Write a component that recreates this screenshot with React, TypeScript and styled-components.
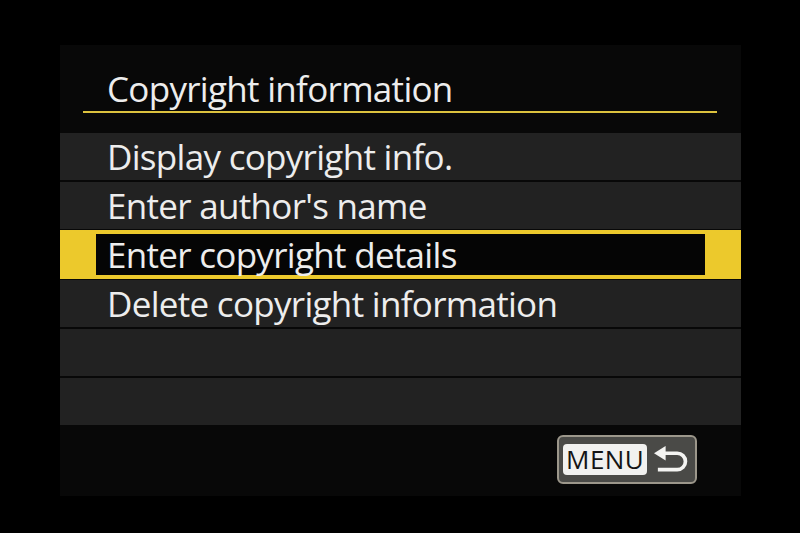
import styled, { createGlobalStyle } from "styled-components";

const GlobalStyle = createGlobalStyle`
  html, body {
    margin: 0;
    padding: 0;
    background: #000;
  }
  body {
    font-family: "Open Sans", "Noto Sans", "DejaVu Sans", sans-serif;
  }
`;

const Page = styled.div`
  width: 800px;
  height: 533px;
  background: #000;
  padding: 45px 0 0 60px;
  box-sizing: border-box;
`;

const Screen = styled.div`
  width: 681px;
  height: 451px;
  background: #080808;
  display: flex;
  flex-direction: column;
`;

const Header = styled.div`
  height: 88px;
  padding-top: 24px;
  box-sizing: border-box;
`;

const Title = styled.div`
  height: 40px;
  line-height: 40px;
  padding-left: 47px;
  font-size: 35px;
  font-weight: 500;
  color: #ededed;
  letter-spacing: -0.7px;
`;

const Rule = styled.div`
  margin: 2px 0 0 23px;
  width: 634px;
  height: 2px;
  background: #dcc23e;
`;

const List = styled.div`
  display: flex;
  flex-direction: column;
  gap: 2px;
`;

const Row = styled.div<{ $active?: boolean }>`
  box-sizing: border-box;
  display: flex;
  background: ${(p) => (p.$active ? "#ecc92c" : "#222222")};
  padding: ${(p) => (p.$active ? "4px 36px" : "0 0 0 47px")};
  margin: ${(p) => (p.$active ? "-1px 0" : "0")};
  height: ${(p) => (p.$active ? "49px" : "47px")};
`;

const Inner = styled.div<{ $active?: boolean }>`
  flex: 1;
  display: flex;
  align-items: center;
  background: ${(p) => (p.$active ? "#050505" : "transparent")};
  padding-left: ${(p) => (p.$active ? "11px" : "0")};
`;

const Label = styled.span`
  font-size: 35px;
  font-weight: 500;
  color: #ededed;
  letter-spacing: -0.7px;
  white-space: nowrap;
`;

const Footer = styled.div`
  flex: 1;
  display: flex;
  justify-content: flex-end;
  align-items: flex-start;
  padding: 10px 44px 0 0;
`;

const MenuButton = styled.div`
  width: 140px;
  height: 49px;
  box-sizing: border-box;
  border: 2px solid #9c978b;
  border-radius: 6px;
  background: #4a4a47;
  display: flex;
  align-items: center;
  padding: 0 6px 0 4px;
  gap: 7px;
`;

const MenuLabel = styled.div`
  width: 87px;
  height: 31px;
  border-radius: 4px;
  background: #f1f1ef;
  color: #141414;
  font-size: 26px;
  font-weight: 500;
  line-height: 31px;
  text-align: center;
  letter-spacing: 0.4px;
`;

const items = [
  "Display copyright info.",
  "Enter author's name",
  "Enter copyright details",
  "Delete copyright information",
  "",
  "",
];

function ReturnIcon() {
  return (
    <svg width="36" height="28" viewBox="0 0 36 28">
      <polygon points="0,7 12,-0.5 12,14.5" fill="#f4f4f2" />
      <path
        d="M9 7 H24 A8.5 8.5 0 0 1 24 24 H4"
        fill="none"
        stroke="#f4f4f2"
        strokeWidth="3.8"
      />
    </svg>
  );
}

export default function App() {
  return (
    <>
      <GlobalStyle />
      <Page>
        <Screen>
          <Header>
            <Title>Copyright information</Title>
            <Rule />
          </Header>
          <List>
            {items.map((text, i) => {
              const active = i === 2;
              return (
                <Row key={i} $active={active}>
                  <Inner $active={active}>
                    <Label>{text}</Label>
                  </Inner>
                </Row>
              );
            })}
          </List>
          <Footer>
            <MenuButton>
              <MenuLabel>MENU</MenuLabel>
              <ReturnIcon />
            </MenuButton>
          </Footer>
        </Screen>
      </Page>
    </>
  );
}
